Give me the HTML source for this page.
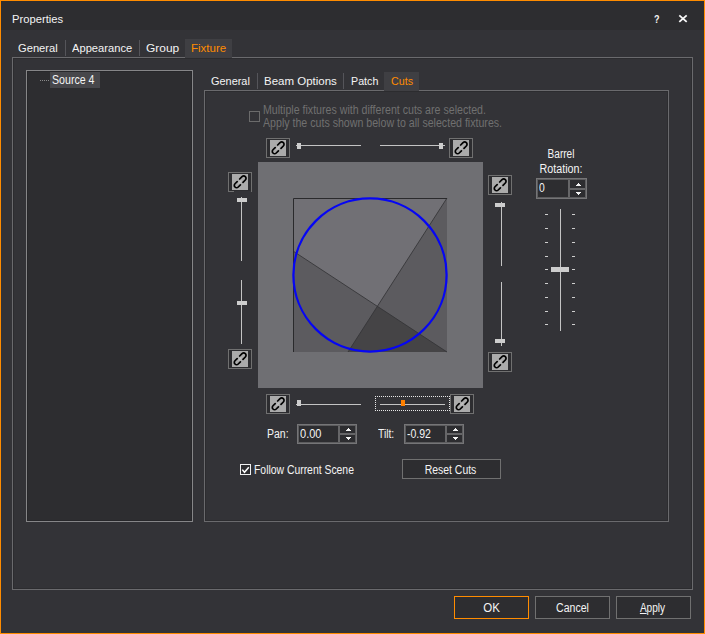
<!DOCTYPE html>
<html><head><meta charset="utf-8"><title>Properties</title>
<style>
html,body{margin:0;padding:0;}
body{width:705px;height:634px;overflow:hidden;background:#333337;position:relative;font-family:"Liberation Sans",sans-serif;font-size:12px;color:#f4f4f4;}
.abs{position:absolute;}
#win{position:absolute;left:0;top:0;width:703px;height:632px;border:1px solid #ff8c00;background:#333337;}
#title{position:absolute;left:1px;top:1px;width:703px;height:29px;background:#2d2d30;}
.t{position:absolute;white-space:nowrap;line-height:14px;transform-origin:0 0;}
.c{transform-origin:50% 0;text-align:center;}
.seg{font-size:11.5px;color:#f4f4f4;}
.or{color:#ff8c00;}
.box{position:absolute;box-sizing:border-box;}
.lnk{position:absolute;width:24px;height:20px;box-sizing:border-box;border:1px solid #707070;background:#2d2d30;}
.lnk svg{position:absolute;left:3px;top:1px;}
.hl{position:absolute;height:1px;background:#c4c4c4;}
.vl{position:absolute;width:1px;background:#c4c4c4;}
.th{position:absolute;background:#cdcdcd;}
.tk{position:absolute;width:3px;height:1px;background:#cfcfcf;}
.spin::before{content:"";position:absolute;left:-2px;top:-2px;right:-2px;bottom:-2px;border:1px solid #757577;}
.spin{position:absolute;box-sizing:border-box;border:2px solid #5c5c5e;background:#2d2d30;height:20px;}
.spin b{position:absolute;top:0;right:15px;width:2px;height:16px;background:#666668;}
.spin s{position:absolute;top:7px;right:0;width:15px;height:2px;background:#666668;}
.spin svg{position:absolute;right:0;top:0;}
</style></head><body>
<div id="win"></div>
<div id="title"></div>
<div class="t seg" id="tProperties" style="left:12.2px;top:12px;transform:scaleX(.975);">Properties</div>
<div class="t" id="tq" style="left:653.6px;top:12px;font-size:11px;font-weight:bold;transform:scaleX(.82);">?</div>
<svg class="abs" style="left:678px;top:14px" width="10" height="10"><path d="M1.3 1.3 L8.7 7.9 M8.7 1.3 L1.3 7.9" stroke="#f8f8f8" stroke-width="1.8" fill="none"/></svg>

<!-- outer tabs -->
<div class="t seg" id="tGeneral" style="left:18.4px;top:41px;transform:scaleX(.97);">General</div>
<div class="vl" style="left:65px;top:40px;height:16px;background:#55555a;"></div>
<div class="t seg" id="tAppearance" style="left:72px;top:41px;transform:scaleX(.97);">Appearance</div>
<div class="vl" style="left:139px;top:40px;height:16px;background:#55555a;"></div>
<div class="t seg" id="tGroup" style="left:146px;top:41px;transform:scaleX(1.04);">Group</div>
<div class="box" style="left:12px;top:57px;width:681px;height:533px;border:1px solid #6a6a6d;box-shadow:inset 0 0 0 1px rgba(0,0,0,.13);"></div>

<div class="box" style="left:185px;top:39px;width:47px;height:19px;background:#3f3f43;"></div>
<div class="t seg or" id="tFixture" style="left:191px;top:41px;">Fixture</div>
<!-- tree -->
<div class="box" style="left:26px;top:70px;width:167px;height:452px;border:1px solid #868688;background:#2d2d30;box-shadow:inset 0 0 0 1px rgba(0,0,0,.12);"></div>
<div class="box" style="left:50px;top:72px;width:50px;height:16px;background:#47474b;"></div>
<div class="abs" style="left:40px;top:80px;width:9px;height:1px;background:repeating-linear-gradient(90deg,#8a8a8a 0 1px,transparent 1px 2px);"></div>
<div class="t" id="tSource" style="left:51.5px;top:73px;transform:scaleX(.885);">Source 4</div>

<!-- inner tabs -->
<div class="t seg" id="tGeneral2" style="left:210.6px;top:74px;transform:scaleX(.95);">General</div>
<div class="vl" style="left:257px;top:73px;height:16px;background:#55555a;"></div>
<div class="t seg" id="tBeam" style="left:264px;top:74px;">Beam Options</div>
<div class="vl" style="left:343px;top:73px;height:16px;background:#55555a;"></div>
<div class="t seg" id="tPatch" style="left:350.5px;top:74px;transform:scaleX(.93);">Patch</div>
<div class="box" style="left:204px;top:90px;width:465px;height:432px;border:1px solid #6a6a6d;box-shadow:inset 0 0 0 1px rgba(0,0,0,.13);"></div>

<div class="box" style="left:384px;top:72px;width:35px;height:19px;background:#3f3f43;"></div>
<div class="t seg or" id="tCuts" style="left:390.5px;top:74px;transform:scaleX(.93);">Cuts</div>
<!-- checkbox disabled -->
<div class="box" style="left:249px;top:111px;width:11px;height:11px;border:1px solid #6b6b6b;"></div>
<div class="t" id="tMulti" style="left:263px;top:104px;color:#707070;line-height:13px;transform:scaleX(.885);">Multiple fixtures with different cuts are selected.<br>Apply the cuts shown below to all selected fixtures.</div>

<!-- preview -->
<svg class="abs" style="left:258px;top:162px" width="226" height="226" viewBox="258 162 226 226">
  <rect x="258" y="162" width="225" height="226" fill="#6f6f73"/>
  <rect x="293" y="198" width="154" height="154" fill="#717075"/>
  <polygon points="447,198 447,352 348,352" fill="#000" fill-opacity="0.18"/>
  <polygon points="293,251 447,352 293,352" fill="#000" fill-opacity="0.18"/>
  <polygon points="377.4,306.3 447,352 348,352" fill="#000" fill-opacity="0.08"/>
  <path d="M447 198 L348 352 M293 251 L447 352" stroke="#343436" stroke-width="0.85" fill="none"/>
  <path d="M293.5 352 V198.5 H447" stroke="#2a2a2c" stroke-width="1" fill="none"/>
  <circle cx="370" cy="275" r="76.6" fill="none" stroke="#0606f4" stroke-width="2.25"/>
</svg>

<!-- link buttons -->
<svg width="0" height="0" style="position:absolute"><defs>
<g id="lk"><rect width="16" height="16" fill="#ababab"/>
<g transform="translate(8,8) rotate(-45)" fill="none" stroke="#000" stroke-width="1.7" stroke-linecap="round">
<path d="M-1.4,0 H1.4" stroke="#c4c4c4" stroke-width="1.2"/>
<path d="M1.9,-2.35 H5.2 A2.35,2.35 0 0 1 5.2,2.35 H1.9"/>
<path d="M-1.7,-2.3 H-4.8 A2.3,2.3 0 0 0 -4.8,2.3 H-1.7"/>
</g></g></defs></svg>
<div class="lnk" style="left:266px;top:138px;"><svg width="16" height="16"><use href="#lk"/></svg></div>
<div class="lnk" style="left:449px;top:138px;"><svg width="16" height="16"><use href="#lk"/></svg></div>
<div class="lnk" style="left:228px;top:172px;"><svg width="16" height="16"><use href="#lk"/></svg></div>
<div class="lnk" style="left:228px;top:349px;"><svg width="16" height="16"><use href="#lk"/></svg></div>
<div class="lnk" style="left:488px;top:175px;"><svg width="16" height="16"><use href="#lk"/></svg></div>
<div class="lnk" style="left:488px;top:352px;"><svg width="16" height="16"><use href="#lk"/></svg></div>
<div class="lnk" style="left:266px;top:394px;"><svg width="16" height="16"><use href="#lk"/></svg></div>
<div class="lnk" style="left:450px;top:394px;"><svg width="16" height="16"><use href="#lk"/></svg></div>
<div class="box" style="left:234px;top:191px;width:17px;height:1px;background:#333337;"></div>

<!-- sliders: top -->
<div class="hl" style="left:296px;top:145px;width:65px;"></div>
<div class="th" style="left:297px;top:143px;width:4px;height:6px;"></div>
<div class="hl" style="left:380px;top:145px;width:65px;"></div>
<div class="th" style="left:439px;top:143px;width:4px;height:6px;"></div>
<!-- bottom -->
<div class="hl" style="left:296px;top:404px;width:65px;"></div>
<div class="th" style="left:297px;top:400px;width:4px;height:6px;"></div>
<div class="box" style="left:375px;top:396px;width:75px;height:15px;border:1px dotted #e8e8e8;"></div>
<div class="hl" style="left:380px;top:404px;width:65px;"></div>
<div class="th" style="left:401px;top:400px;width:4px;height:6px;background:#ff8000;"></div>
<!-- left -->
<div class="vl" style="left:241px;top:197px;height:64px;"></div>
<div class="th" style="left:237px;top:198px;width:10px;height:4px;"></div>
<div class="vl" style="left:241px;top:280px;height:64px;"></div>
<div class="th" style="left:237px;top:301px;width:10px;height:4px;"></div>
<!-- right -->
<div class="vl" style="left:501px;top:202px;height:64px;"></div>
<div class="th" style="left:495px;top:203px;width:10px;height:4px;"></div>
<div class="vl" style="left:501px;top:282px;height:64px;"></div>
<div class="th" style="left:495px;top:339px;width:10px;height:4px;"></div>

<!-- Barrel -->
<div class="t c" id="tBarrel" style="left:536px;top:147px;width:50px;transform:scaleX(.84);">Barrel</div>
<div class="t c" id="tRotation" style="left:536px;top:162px;width:50px;transform:scaleX(.895);">Rotation:</div>
<div class="spin" style="left:536px;top:178px;width:51px;height:21px;"><b style="height:17px"></b><s style="top:8px"></s>
<svg width="15" height="17"><path d="M8 3h1v1h-1z M7 4h3v1h-3z M6 5h5v1h-5z M6 12h5v1h-5z M7 13h3v1h-3z M8 14h1v1h-1z" fill="#f4f4f4"/></svg></div>
<div class="t" id="tZero" style="left:538.7px;top:181px;transform:scaleX(.86);">0</div>
<div class="vl" style="left:560px;top:209px;height:122px;"></div>
<div class="tk" style="left:545px;top:214px"></div><div class="tk" style="left:572px;top:214px"></div>
<div class="tk" style="left:545px;top:228px"></div><div class="tk" style="left:572px;top:228px"></div>
<div class="tk" style="left:545px;top:242px"></div><div class="tk" style="left:572px;top:242px"></div>
<div class="tk" style="left:545px;top:256px"></div><div class="tk" style="left:572px;top:256px"></div>
<div class="tk" style="left:545px;top:269px"></div><div class="tk" style="left:572px;top:269px"></div>
<div class="tk" style="left:545px;top:283px"></div><div class="tk" style="left:572px;top:283px"></div>
<div class="tk" style="left:545px;top:297px"></div><div class="tk" style="left:572px;top:297px"></div>
<div class="tk" style="left:545px;top:311px"></div><div class="tk" style="left:572px;top:311px"></div>
<div class="tk" style="left:545px;top:324px"></div><div class="tk" style="left:572px;top:324px"></div>
<div class="th" style="left:551px;top:267px;width:18px;height:5px;"></div>

<!-- pan/tilt -->
<div class="t" id="tPan" style="left:267.3px;top:427px;transform:scaleX(.875);">Pan:</div>
<div class="spin" style="left:297px;top:424px;width:60px;"><b></b><s></s>
<svg width="15" height="16"><path d="M8 2h1v1h-1z M7 3h3v1h-3z M6 4h5v1h-5z M6 11h5v1h-5z M7 12h3v1h-3z M8 13h1v1h-1z" fill="#f4f4f4"/></svg></div>
<div class="t" id="tPanV" style="left:299.5px;top:427px;transform:scaleX(.92);">0.00</div>
<div class="t" id="tTilt" style="left:378.4px;top:427px;transform:scaleX(.86);">Tilt:</div>
<div class="spin" style="left:404px;top:424px;width:60px;"><b></b><s></s>
<svg width="15" height="16"><path d="M8 2h1v1h-1z M7 3h3v1h-3z M6 4h5v1h-5z M6 11h5v1h-5z M7 12h3v1h-3z M8 13h1v1h-1z" fill="#f4f4f4"/></svg></div>
<div class="t" id="tTiltV" style="left:406.5px;top:427px;transform:scaleX(.875);">-0.92</div>

<!-- follow -->
<div class="box" style="left:240px;top:464px;width:11px;height:11px;border:1px solid #f0f0f0;background:#2d2d30;"></div>
<svg class="abs" style="left:240px;top:464px" width="11" height="11"><path d="M2.3 5.6 L4.5 8.3 L8.8 3.2" stroke="#fff" stroke-width="1.5" fill="none"/></svg>
<div class="t" id="tFollow" style="left:253.8px;top:463px;transform:scaleX(.866);">Follow Current Scene</div>
<div class="box" style="left:402px;top:459px;width:99px;height:20px;border:1px solid #707070;background:#2d2d30;"></div>
<div class="t c" id="tReset" style="left:401.3px;top:463px;width:99px;transform:scaleX(.87);">Reset Cuts</div>

<div class="box" style="left:454px;top:596px;width:75px;height:23px;border:1px solid #ff8c00;background:#2d2d30;"></div>
<div class="t c" id="tOK" style="left:453.8px;top:601px;width:75px;transform:scaleX(.96);">OK</div>
<div class="box" style="left:535px;top:596px;width:75px;height:23px;border:1px solid #707070;background:#2d2d30;"></div>
<div class="t c" id="tCancel" style="left:534.6px;top:601px;width:75px;transform:scaleX(.88);">Cancel</div>
<div class="box" style="left:616px;top:596px;width:75px;height:23px;border:1px solid #707070;background:#2d2d30;"></div>
<div class="t c" id="tApply" style="left:615.2px;top:601px;width:75px;transform:scaleX(.84);"><u>A</u>pply</div>
</body></html>
